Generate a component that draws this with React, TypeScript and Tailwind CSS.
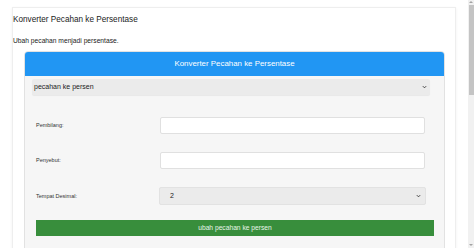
import { useState } from "react";

function Chevron({ className }: { className?: string }) {
  return (
    <svg viewBox="0 0 6 4" className={className} fill="none">
      <path d="M1 1 L3 3 L5 1" stroke="#333" strokeWidth="1.1" />
    </svg>
  );
}

function Row({
  label,
  children,
}: {
  label: string;
  children: React.ReactNode;
}) {
  return (
    <div className="flex items-center">
      <div className="w-[135px] shrink-0 pl-[11px] text-[5.5px] text-[#333]">{label}</div>
      {children}
    </div>
  );
}

export default function App() {
  const [num, setNum] = useState("");
  const [den, setDen] = useState("");

  return (
    <div className="flex h-[248px] w-[474px] overflow-hidden bg-white font-['Liberation_Sans',Arial,sans-serif] text-[#222]">
      <div className="flex-1">
        <div className="ml-[12px] mt-[7px] h-[260px] w-[444px] border border-[#eeeeee] bg-white shadow-[0_1px_3px_rgba(0,0,0,0.06)]">
          <div className="flex h-[24px] items-center text-[8.2px]">
            Konverter Pecahan ke Persentase
          </div>
          <div className="flex h-[18px] items-center text-[6.7px]">
            Ubah pecahan menjadi persentase.
          </div>
          <div className="ml-[11px] mt-[1px] w-[421px] overflow-hidden rounded-t-[4px] border border-[#e2e2e2] bg-[#f6f6f6]">
            <div className="flex h-[24px] items-center justify-center bg-[#2196f3] text-[7.9px] text-white">
              Konverter Pecahan ke Persentase
            </div>
            <div className="pb-4">
              <div className="ml-[7px] mt-[3px] flex h-[16px] w-[398px] items-center justify-between rounded-[2px] bg-[#ebebeb] pl-[2px] pr-[3px] text-[7px] text-[#222] shadow-[0_1px_1px_rgba(0,0,0,0.06)]">
                <span>pecahan ke persen</span>
                <Chevron className="h-[4px] w-[5px]" />
              </div>
              <div className="mt-[22px] flex flex-col">
                <Row label="Pembilang:">
                  <input
                    value={num}
                    onChange={(e) => setNum(e.target.value)}
                    className="h-[17px] w-[265px] rounded-[2px] border border-[#e0e0e0] bg-white outline-none"
                  />
                </Row>
                <div className="mt-[18px]">
                  <Row label="Penyebut:">
                    <input
                      value={den}
                      onChange={(e) => setDen(e.target.value)}
                      className="h-[17px] w-[265px] rounded-[2px] border border-[#e0e0e0] bg-white outline-none"
                    />
                  </Row>
                </div>
                <div className="mt-[18px]">
                  <Row label="Tempat Desimal:">
                    <div className="-ml-[1px] flex h-[18px] w-[267px] items-center justify-between rounded-[2px] border border-[#e2e2e2] bg-[#ebebeb] pl-[10px] pr-[4px] text-[7px]">
                      <span>2</span>
                      <Chevron className="h-[4px] w-[5px]" />
                    </div>
                  </Row>
                </div>
                <button
                  type="button"
                  className="ml-[11px] mt-[15px] flex h-[16px] w-[398px] items-center justify-center bg-[#388e3c] text-[6.7px] text-[#e8f5e9]"
                >
                  ubah pecahan ke persen
                </button>
              </div>
            </div>
          </div>
        </div>
      </div>
      <div className="flex w-[6px] flex-col items-center bg-[#f1f1f1]">
        <div className="mt-[1px] h-0 w-0 border-x-[2px] border-b-[2px] border-x-transparent border-b-[#a3a3a3]" />
        <div className="mt-[2px] h-[90px] w-[5px] bg-[#c4c4c4]" />
        <div className="mt-auto mb-[2px] h-0 w-0 border-x-[2px] border-t-[2px] border-x-transparent border-t-[#a3a3a3]" />
      </div>
    </div>
  );
}
